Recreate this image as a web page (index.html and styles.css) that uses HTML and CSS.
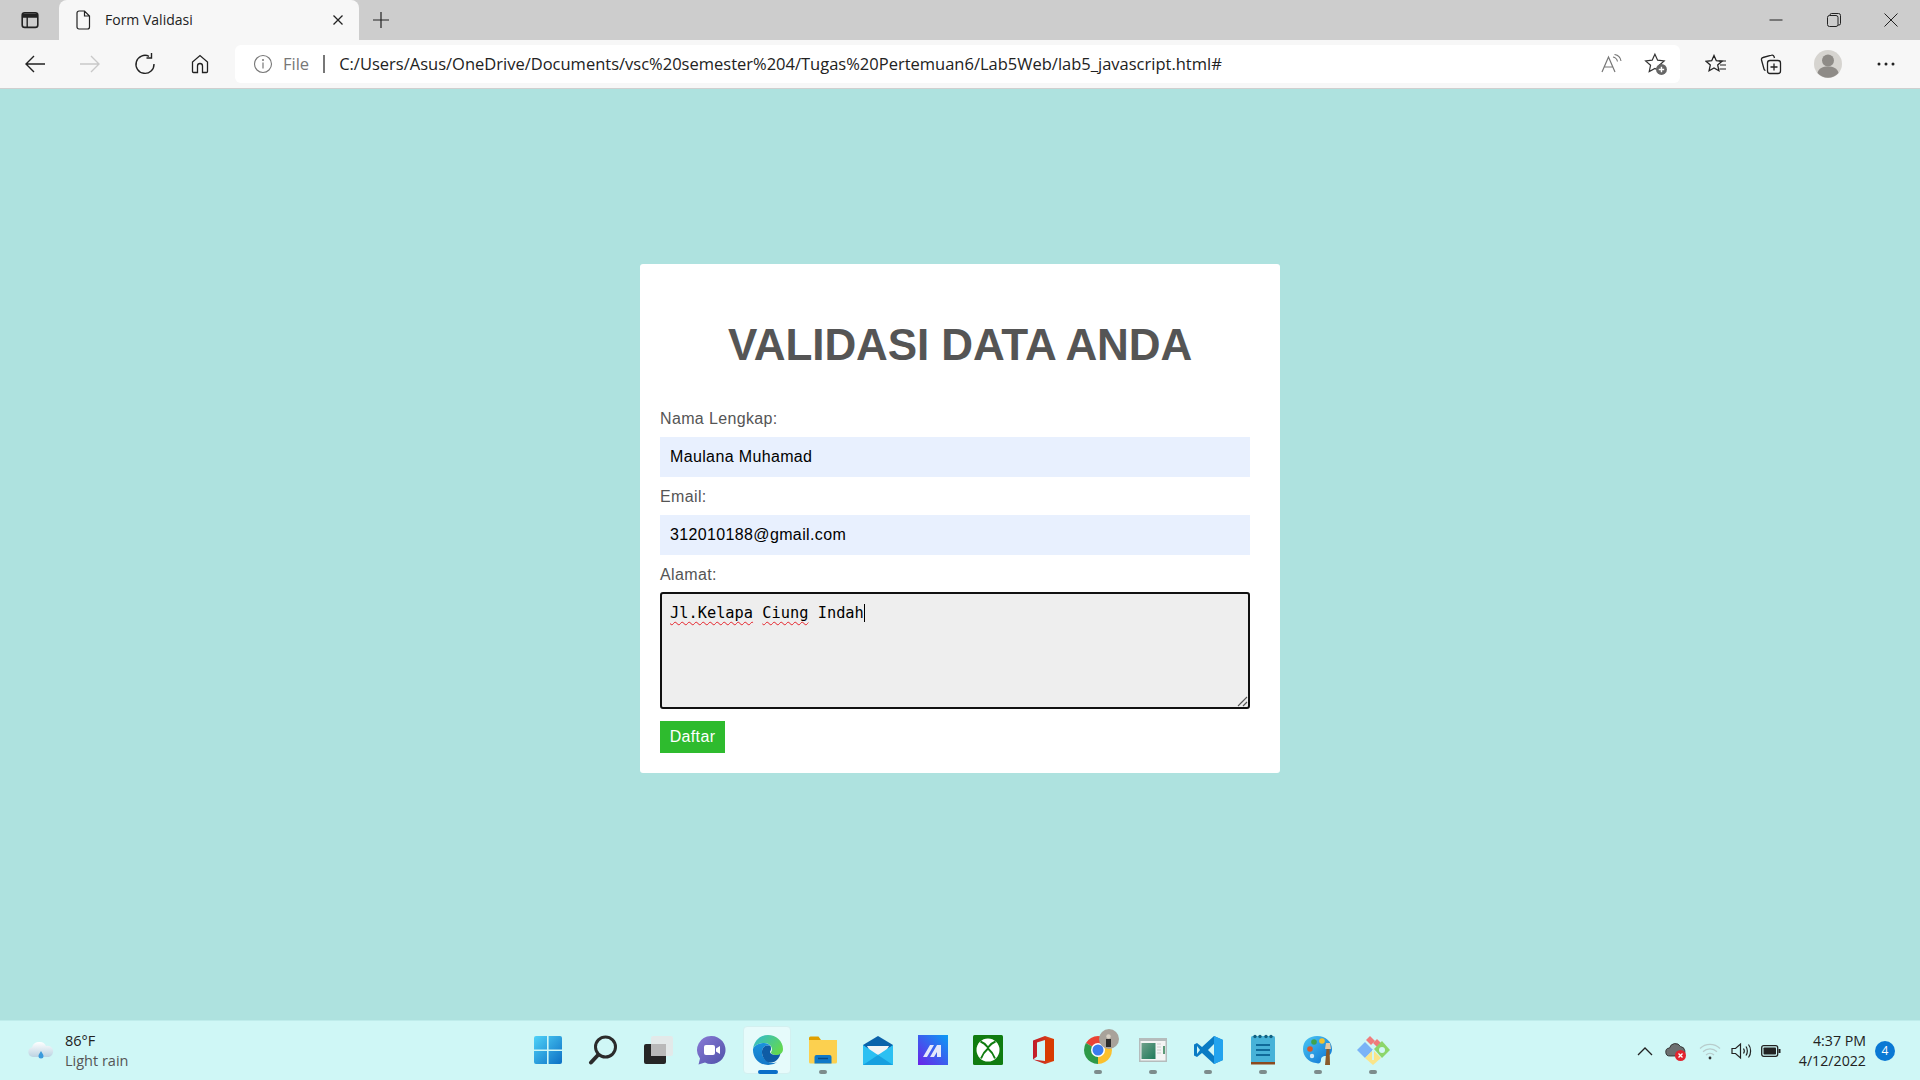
FILE: index.html
```html
<!DOCTYPE html>
<html lang="en">
  <head>
    <meta charset="UTF-8" />
    <title>Form Validasi</title>
    <link rel="stylesheet" href="styles.css">
  </head>
  <body>
    <div id="screen">
      <!-- browser tabs -->
      <div class="tabbar">
        <div class="side-btn">
          <svg width="18" height="18" viewBox="0 0 18 18"><rect x="1.2" y="1.8" width="15.6" height="14.6" rx="2.5" fill="none" stroke="#222" stroke-width="1.6"/><path d="M1.5 6h15M6.2 6v10" stroke="#222" stroke-width="1.4"/><path d="M2 2.5h14v3.5H2z" fill="#222"/></svg>
        </div>
        <div class="tab">
          <svg class="tab-doc" width="16" height="20" viewBox="0 0 16 20"><path d="M2 3a2 2 0 0 1 2-2h5.500L14.500 6v11a2 2 0 0 1-2 2H4a2 2 0 0 1-2-2zM9.500 1v5h5" fill="none" stroke="#222" stroke-width="1.200"/></svg>
          <span class="tab-title">Form Validasi</span>
          <svg class="tab-x" width="12" height="12" viewBox="0 0 12 12"><path d="M1.500 1.500l9 9M10.500 1.500l-9 9" stroke="#222" stroke-width="1.300"/></svg>
        </div>
        <div class="new-tab">
          <svg width="18" height="18" viewBox="0 0 18 18"><path d="M9 1v16M1 9h16" stroke="#222" stroke-width="1.200"/></svg>
        </div>
        <div class="win-btns">
          <div class="win win-min"><svg width="14" height="14" viewBox="0 0 14 14"><path d="M.5 7h13" stroke="#222" stroke-width="1"/></svg></div>
          <div class="win"><svg width="14" height="14" viewBox="0 0 14 14"><rect x=".5" y="2.500" width="10.500" height="11" rx="2" fill="none" stroke="#222"/><path d="M3 2.500V2a1.500 1.500 0 0 1 1.500-1.500h7A2 2 0 0 1 13.500 2.500v8a1.500 1.500 0 0 1-1.500 1.500H11" fill="none" stroke="#222"/></svg></div>
          <div class="win"><svg width="14" height="14" viewBox="0 0 14 14"><path d="M.5.5l13 13M13.500.5l-13 13" stroke="#222" stroke-width="1"/></svg></div>
        </div>
      </div>

      <!-- address bar row -->
      <div class="toolbar">
        <div class="tool"><svg width="22" height="20" viewBox="0 0 22 20"><path d="M21 10H2M10 2l-8 8 8 8" fill="none" stroke="#222" stroke-width="1.400"/></svg></div>
        <div class="tool"><svg width="22" height="20" viewBox="0 0 22 20"><path d="M1 10h19M12 2l8 8-8 8" fill="none" stroke="#c9c9c9" stroke-width="1.400"/></svg></div>
        <div class="tool"><svg width="22" height="22" viewBox="0 0 22 22"><path d="M15 3.300A9 9 0 1 0 20 11" fill="none" stroke="#222" stroke-width="1.400"/><path d="M15.500 0v5h-5" fill="none" stroke="#222" stroke-width="1.400" transform="translate(2 0)"/></svg></div>
        <div class="tool"><svg width="20" height="20" viewBox="0 0 20 20"><path d="M7.500 18.500V12a2.500 2.500 0 0 1 5 0v6.500h4a1 1 0 0 0 1-1V8L10 1.500 2.500 8v9.500a1 1 0 0 0 1 1z" fill="none" stroke="#222" stroke-width="1.300"/></svg></div>
        <div class="addr">
          <svg class="addr-info" width="20" height="20" viewBox="0 0 20 20"><circle cx="10" cy="10" r="8.500" fill="none" stroke="#777" stroke-width="1.100"/><path d="M10 8.500v6" stroke="#777" stroke-width="1.200"/><circle cx="10" cy="6" r="1" fill="#777"/></svg>
          <span class="addr-file">File</span>
          <span class="addr-sep"></span>
          <span class="addr-url">C:/Users/Asus/OneDrive/Documents/vsc%20semester%204/Tugas%20Pertemuan6/Lab5Web/lab5_javascript.html#</span>
          <svg class="addr-read" width="22" height="20" viewBox="0 0 22 20"><path d="M1 18L7.500 3 14 18M3.500 13h8" fill="none" stroke="#777" stroke-width="1.200"/><path d="M12 3c2.500.5 4 2.200 4.500 4.500M13.500 .5c3.500.5 6 3.200 6.500 6.500" fill="none" stroke="#777" stroke-width="1.100"/></svg>
          <svg class="addr-star" width="24" height="24" viewBox="0 0 22 22"><path d="M10 2l2.500 5.500 6 .7-4.500 4 1.200 5.800L10 15l-5.200 3 1.200-5.800-4.500-4 6-.7z" fill="none" stroke="#333" stroke-width="1.100"/><circle cx="16" cy="16" r="5" fill="#666"/><path d="M16 13.500v5M13.500 16h5" stroke="#fff" stroke-width="1.300"/></svg>
        </div>
        <div class="tool"><svg width="22" height="20" viewBox="0 0 22 20"><path d="M9 1.500l2.300 5.200 5.700.6-4.300 3.800 1.200 5.600L9 13.900l-4.900 2.800 1.200-5.600L1 7.300l5.700-.6z" fill="none" stroke="#222" stroke-width="1.300"/><path d="M14 7h7M15 11h6M14.500 15h6.500" stroke="#222" stroke-width="1.200"/></svg></div>
        <div class="tool"><svg width="22" height="22" viewBox="0 0 22 22"><rect x="7.500" y="7.500" width="13" height="13" rx="2.500" fill="none" stroke="#222" stroke-width="1.300"/><path d="M14 10.500v7M10.500 14h7" stroke="#222" stroke-width="1.300"/><path d="M14.500 5l-.5-1.500a2 2 0 0 0-2.500-1.300L3 4.500a2 2 0 0 0-1.500 2.500l2.500 9c.2.7.6 1.200 1.500 1.500" fill="none" stroke="#222" stroke-width="1.300"/></svg></div>
        <div class="tool tool-profile">
          <svg width="28" height="28" viewBox="0 0 28 28"><circle cx="14" cy="14" r="14" fill="#d6d4d0"/><circle cx="14" cy="10.500" r="6" fill="#8e8b87"/><path d="M3.500 23c1-5 5.500-6.500 10.500-6.500s9.500 1.500 10.500 6.500A14 14 0 0 1 3.500 23z" fill="#8e8b87"/></svg>
        </div>
        <div class="tool"><svg width="18" height="4" viewBox="0 0 18 4"><circle cx="2" cy="2" r="1.500" fill="#222"/><circle cx="9" cy="2" r="1.500" fill="#222"/><circle cx="16" cy="2" r="1.500" fill="#222"/></svg></div>
      </div>

      <!-- the page itself -->
      <main class="page">
        <form class="card">
          <h1 class="card-title">VALIDASI DATA ANDA</h1>
          <label class="lbl" for="nama">Nama Lengkap:</label>
          <input class="txt" id="nama" type="text" value="Maulana Muhamad" />
          <label class="lbl" for="email">Email:</label>
          <input class="txt" id="email" type="text" value="312010188@gmail.com" />
          <div class="lbl lbl-area">Alamat:</div>
          <div class="area">
            <span class="typo">Jl.Kelapa</span> <span class="typo">Ciung</span> Indah<span class="caret"></span>
            <svg class="grip" width="12" height="12" viewBox="0 0 12 12"><path d="M11 2L2 11M11 7l-4 4" stroke="#555" stroke-width="1.100"/></svg>
          </div>
          <button class="btn" type="button">Daftar</button>
        </form>
      </main>

      <!-- windows taskbar -->
      <footer class="taskbar">
        <div class="weather">
          <svg width="28" height="24" viewBox="0 0 28 24"><defs><linearGradient id="cl" x1="0" y1="0" x2="0" y2="1"><stop offset="0" stop-color="#fff"/><stop offset="1" stop-color="#bcd3e2"/></linearGradient></defs><path d="M6 18a5 5 0 0 1-1-9.800A7 7 0 0 1 13 3a6.500 6.500 0 0 1 6 4 5.500 5.500 0 0 1 3 11z" fill="url(#cl)"/><path d="M14 12c-1.500 2.500-2.500 3.500-2.500 5a2.500 2.500 0 0 0 5 0c0-1.500-1-2.500-2.500-5z" fill="#3b9bdc"/></svg>
          <div class="weather-txt">
            <div class="temp">86°F</div>
            <div class="cond">Light rain</div>
          </div>
        </div>

        <div class="apps">
          <div class="app">
            <svg width="30" height="30" viewBox="0 0 30 30"><defs><linearGradient id="w" x1="0" y1="0" x2="1" y2="1"><stop offset="0" stop-color="#4fd2f8"/><stop offset="1" stop-color="#0c6fc4"/></linearGradient></defs><path d="M1 3a2 2 0 0 1 2-2h11v13.400H1zM15.600 1H27a2 2 0 0 1 2 2v11.400H15.600zM1 16h13v13H3a2 2 0 0 1-2-2zM15.600 16H29v11a2 2 0 0 1-2 2H15.600z" fill="url(#w)"/></svg>
          </div>
          <div class="app">
            <svg width="30" height="30" viewBox="0 0 30 30"><circle cx="17.500" cy="12" r="10" fill="none" stroke="#2b2b2b" stroke-width="3"/><path d="M10 20l-7 7.500" stroke="#2b2b2b" stroke-width="4" stroke-linecap="round"/></svg>
          </div>
          <div class="app">
            <svg width="30" height="30" viewBox="0 0 30 30"><rect x="1" y="9" width="22" height="20" rx="2" fill="#262626"/><rect x="8" y="1" width="22" height="20" rx="2" fill="#e6e6e6" fill-opacity=".85"/><rect x="8" y="9" width="15" height="12" fill="#b9b9b9"/></svg>
          </div>
          <div class="app app-chat">
            <svg width="30" height="30" viewBox="0 0 30 30"><defs><linearGradient id="ch" x1="0" y1="0" x2="1" y2="1"><stop offset="0" stop-color="#8a7ad6"/><stop offset="1" stop-color="#4f51a8"/></linearGradient></defs><path d="M15.500 1a14 14 0 1 1-6.500 26.400L2.500 29.500 4 23.500A14 14 0 0 1 15.500 1z" fill="url(#ch)"/><rect x="8" y="10" width="11" height="10" rx="2" fill="#fff"/><path d="M20 13.500l4-2.500v8l-4-2.500z" fill="#fff"/></svg>
          </div>
          <div class="app app-active">
            <svg width="32" height="32" viewBox="0 0 32 32"><defs><linearGradient id="e1" x1="0" y1="0" x2="1" y2=".6"><stop offset="0" stop-color="#2fb8d8"/><stop offset="1" stop-color="#62d851"/></linearGradient><linearGradient id="e2" x1="0" y1="0" x2="0" y2="1"><stop offset="0" stop-color="#1a92dc"/><stop offset="1" stop-color="#1578c8"/></linearGradient></defs><path d="M1 15C2 7 8 1 16 1c8 0 15 6 15 14 0 4-3 6-7 6-3 0-5-1-5-2.500 0-1 1-1.500 1-3 0-4-4-7-9-6.500C6 9.500 2 12 1 15z" fill="url(#e1)"/><path d="M1 15c1-3 5-5.500 10-6 3-.3 6 .8 7.500 3-4-1.500-8 .5-8.500 5-.5 5 3 10 8 11.500 2 .6 5 .6 7-.3A15 15 0 0 1 16 31C7 31 .5 24 1 15z" fill="url(#e2)"/><path d="M10 17c.5-4.500 4.500-6.500 8.500-5 .4.700.5 1.500.5 3 0 1.500-1 2-1 3 0 1.500 2 3 6 3 2 0 3-.3 4.500-1.500-1 4.500-3.500 7-6 8.300-2 .9-5 .9-7 .3C13 26.600 9.500 22 10 17z" fill="#0f5ca5"/></svg>
            <span class="pip pip-on"></span>
          </div>
          <div class="app">
            <svg width="30" height="30" viewBox="0 0 30 30"><path d="M1 3a1.500 1.500 0 0 1 1.500-1.500h8L13 5H1z" fill="#e0a000"/><path d="M1 5h28v22a1.500 1.500 0 0 1-1.500 1.500h-25A1.500 1.500 0 0 1 1 27z" fill="#fcd04f"/><path d="M6.500 22a2 2 0 0 1 2-2h13a2 2 0 0 1 2 2v6.500h-17z" fill="#0f79c8"/><path d="M10 23.500h10" stroke="#074a86" stroke-width="1.500"/></svg>
            <span class="pip"></span>
          </div>
          <div class="app">
            <svg width="30" height="30" viewBox="0 0 30 30"><path d="M15 1L0 10v19a1 1 0 0 0 1 1h28a1 1 0 0 0 1-1V10z" fill="#0a62aa"/><path d="M4 11h22l-4 7-7 2-7-2z" fill="#f2f4f6"/><path d="M0 10l15 10 15-10v20H0z" fill="#2cc0f2"/><path d="M0 30l15-10 15 10z" fill="#17a0df"/></svg>
          </div>
          <div class="app">
            <svg width="30" height="30" viewBox="0 0 30 30"><defs><linearGradient id="mz" x1="0" y1="1" x2="1" y2="0"><stop offset="0" stop-color="#6b22e8"/><stop offset="1" stop-color="#0a9cf5"/></linearGradient></defs><rect width="30" height="30" fill="url(#mz)"/><path d="M5 22l7-12h4l-7 12zM12 22l7-12h4v12h-4v-5l-3 5z" fill="#e4e8fb"/></svg>
          </div>
          <div class="app">
            <svg width="30" height="30" viewBox="0 0 30 30"><rect width="30" height="30" rx="1.500" fill="#107c10"/><circle cx="15" cy="15" r="11.500" fill="#fff"/><path d="M6 5c3.500 1 6.500 3.500 9 6.500 2.500-3 5.500-5.500 9-6.500-2.500-1.500-5.500-2.500-9-2.500S8.500 3.500 6 5zM5.500 24.500c1.500-4.500 5-9 9.500-11.500 4.500 2.500 8 7 9.500 11.500-2.500 2-5.500 3-9.500 3s-7-1-9.500-3z" fill="#107c10" fill-opacity="0"/><path d="M7.500 6.500c3 1 5.500 3.500 7.500 6 2-2.500 4.500-5 7.500-6M8 23.500c1.500-4 4-7.500 7-10 3 2.500 5.500 6 7 10" fill="none" stroke="#107c10" stroke-width="2"/></svg>
          </div>
          <div class="app">
            <svg width="24" height="30" viewBox="0 0 24 30"><defs><linearGradient id="of" x1="0" y1="0" x2="1" y2="0"><stop offset="0" stop-color="#c01a2a"/><stop offset="1" stop-color="#e04a10"/></linearGradient></defs><path d="M14 1l9 3v22l-9 3-12-4.500 12 1.500V5L6 7.500v14l-4 3V5.500z" fill="url(#of)"/><path d="M14 5v21l9 0V4z" fill="#d83b01"/></svg>
          </div>
          <div class="app">
            <svg width="44" height="44" viewBox="0 0 44 44"><path d="M22 22L9.900 15A14 14 0 0 1 34.100 15z" fill="#ea4335"/><path d="M22 22L34.100 15A14 14 0 0 1 22 36z" fill="#fbc02d"/><path d="M22 22L22 36A14 14 0 0 1 9.900 15z" fill="#2d9a48"/><circle cx="22" cy="22" r="7" fill="#fff"/><circle cx="22" cy="22" r="5.500" fill="#3a7cee"/><circle cx="33" cy="11" r="10" fill="#a8a29a"/><path d="M30 19v-8h5v8z" fill="#2c2c2c"/><circle cx="32.500" cy="8.500" r="2.200" fill="#d8d0c4"/></svg>
            <span class="pip"></span>
          </div>
          <div class="app">
            <svg width="28" height="24" viewBox="0 0 28 24"><defs><linearGradient id="th" x1="0" y1="0" x2="1" y2="1"><stop offset="0" stop-color="#6fa08a"/><stop offset="1" stop-color="#1f7a5a"/></linearGradient></defs><rect width="28" height="24" fill="#b5bcbc"/><rect x="1.500" y="3" width="25" height="19.500" fill="#f4f4f4"/><rect x="2.500" y="5" width="14" height="16" fill="url(#th)"/><path d="M18 6h4M18 9h4M18 12h4M18 15h4" stroke="#ccc"/><rect x="24" y="8" width="2" height="8" fill="#5c9a78"/></svg>
            <span class="pip"></span>
          </div>
          <div class="app">
            <svg width="30" height="30" viewBox="0 0 30 30"><path d="M21 1l9 4v20l-9 4-12-11-5 4-3-1.500v-11L4 8l5 4z" fill="#0a7bc4"/><path d="M21 1l9 4v20l-9 4z" fill="#23a3ee"/><path d="M21 9l-6 6 6 6z" fill="#d3f6f6"/><path d="M4 11v8l3-4z" fill="#d3f6f6"/></svg>
            <span class="pip"></span>
          </div>
          <div class="app">
            <svg width="26" height="32" viewBox="0 0 26 32"><rect x="1" y="2" width="24" height="28" rx="1.500" fill="#47b2d8"/><path d="M1 28h24v2.500H1z" fill="#8c4a1e"/><path d="M6 11h14M6 16h14M6 21h14" stroke="#0f6a9a" stroke-width="2"/><g fill="#13607f"><circle cx="5" cy="2.500" r="1.700"/><circle cx="10" cy="2.500" r="1.700"/><circle cx="16" cy="2.500" r="1.700"/><circle cx="21" cy="2.500" r="1.700"/></g></svg>
            <span class="pip"></span>
          </div>
          <div class="app">
            <svg width="30" height="32" viewBox="0 0 30 32"><defs><linearGradient id="pl" x1="0" y1="0" x2="1" y2="1"><stop offset="0" stop-color="#4ac8f5"/><stop offset="1" stop-color="#0d6fd0"/></linearGradient></defs><path d="M14 2c9 0 15 6 15 13 0 5-3 7-6 7-4 0-5 2-5 4 0 3-2 4-5 3C5 28 0 22 0 15 0 7 6 2 14 2z" fill="url(#pl)"/><circle cx="7" cy="15" r="2.800" fill="#d8582a"/><circle cx="11" cy="8" r="2.800" fill="#3fa34d"/><circle cx="19" cy="7" r="2.800" fill="#f2c22e"/><circle cx="9" cy="22" r="2.200" fill="#cfe9f8"/><path d="M22 31l1.500-16h3L27 31z" fill="#8a5a2a"/><path d="M22 15l1-6h4l1 6z" fill="#e5c8a0"/></svg>
            <span class="pip"></span>
          </div>
          <div class="app">
            <svg width="34" height="30" viewBox="0 0 34 30"><path d="M12 0l5 5-4 4-5-5z" fill="#ef7c7c" transform="translate(2 1)"/><path d="M17 8l4-4 5 5-4 4z" fill="#ef7c7c"/><path d="M1 15l8-8 8 8-8 8z" fill="#7ab3f7"/><path d="M18 14l8-8 8 9-8 8z" fill="#8cd66a"/><path d="M9 23l8-8 8 8-8 7z" fill="#fae58a"/><circle cx="26" cy="15" r="3" fill="#d3f6f6"/><path d="M17 15v10" stroke="#d3f6f6" stroke-width="2"/></svg>
            <span class="pip"></span>
          </div>
        </div>

        <div class="tray">
          <svg class="tray-i" width="16" height="10" viewBox="0 0 16 10"><path d="M1 9l7-7 7 7" fill="none" stroke="#222" stroke-width="1.300"/></svg>
          <svg class="tray-i" width="22" height="22" viewBox="0 0 22 22"><path d="M5 16a4 4 0 0 1-.5-8A6 6 0 0 1 15.500 6.500 5 5 0 0 1 17 16z" fill="#6c6f70" stroke="#222" stroke-width=".8"/><circle cx="15.500" cy="15.500" r="5.500" fill="#e1242f"/><path d="M13.500 13.500l4 4M17.500 13.500l-4 4" stroke="#fff" stroke-width="1.300"/></svg>
          <svg class="tray-i tray-wifi" width="22" height="18" viewBox="0 0 22 18"><path d="M1 6.500a14 14 0 0 1 20 0M4 9.800a10 10 0 0 1 14 0M7 13a6 6 0 0 1 8 0" fill="none" stroke="#b8cccc" stroke-width="1.200"/><circle cx="11" cy="16" r="1.400" fill="#333"/></svg>
          <svg class="tray-i tray-vol" width="22" height="18" viewBox="0 0 22 18"><path d="M1 6.500h3.500L9.500 2v14l-5-4.500H1z" fill="none" stroke="#222" stroke-width="1.200"/><path d="M12.500 6.500c1 1.500 1 3.500 0 5M15 4.500c1.800 2.500 1.800 6.500 0 9M17.500 2.500c2.800 3.500 2.800 9.500 0 13" fill="none" stroke="#222" stroke-width="1.200"/></svg>
          <svg class="tray-i" width="20" height="12" viewBox="0 0 20 12"><rect x=".7" y=".7" width="16" height="10.600" rx="2" fill="none" stroke="#222" stroke-width="1.300"/><rect x="2.500" y="2.500" width="12.500" height="7" rx=".8" fill="#222"/><rect x="17.500" y="4" width="2" height="4" fill="#222"/></svg>
          <div class="clock">
            <div>4:37 PM</div>
            <div>4/12/2022</div>
          </div>
          <div class="badge">4</div>
        </div>
      </footer>
    </div>
  </body>
</html>
```

FILE: styles.css
```css
body,
html {
  margin: 0;
  padding: 0;
}
/* the whole desktop, stacked top to bottom */
#screen {
  display: flex;
  flex-direction: column;
  width: 1920px;
  height: 1080px;
  overflow: hidden;
  font-family: "Open Sans", "Noto Sans", sans-serif;
  color: #222;
}

/* tab strip */
.tabbar {
  display: flex;
  height: 40px;
  background-color: #cdcdcd;
}
.side-btn {
  display: flex;
  align-items: center;
  justify-content: center;
  width: 59px;
}
.tab {
  display: flex;
  align-items: center;
  box-sizing: border-box;
  width: 300px;
  padding: 0 15px 0 16px;
  background-color: #f7f7f7;
  border-radius: 8px 8px 0 0;
}
.tab-doc {
  margin-right: 14px;
}
.tab-title {
  flex: 1;
  padding-bottom: 1px;
  font-size: 14px;
}
.new-tab {
  display: flex;
  align-items: center;
  justify-content: center;
  width: 44px;
}
.win-btns {
  display: flex;
  margin-left: auto;
  padding-right: 1px;
}
.win {
  display: flex;
  align-items: center;
  justify-content: center;
  width: 57px;
}
.win-min {
  margin-right: 1px;
}

/* address row */
.toolbar {
  display: flex;
  align-items: center;
  box-sizing: border-box;
  height: 49px;
  padding: 0 7px;
  background-color: #f7f7f7;
  border-bottom: 1px solid #cfcfcf;
}
.tool {
  display: flex;
  flex: none;
  align-items: center;
  justify-content: center;
  width: 55px;
}
.tool-profile {
  width: 60px;
}
.addr {
  display: flex;
  flex: 1;
  align-items: center;
  height: 38px;
  margin: 0 8px;
  padding: 0 12px 0 18px;
  background-color: #fff;
  border-radius: 6px;
}
.addr-file {
  margin-left: 10px;
  padding-bottom: 2px;
  font-size: 16.500px;
  color: #777;
}
.addr-sep {
  width: 2px;
  height: 18px;
  margin: 0 14px;
  background-color: #777;
}
.addr-url {
  flex: 1;
  padding-bottom: 2px;
  font-size: 16.500px;
  white-space: nowrap;
}
.addr-read {
  margin-right: 21px;
}

/* page area */
.page {
  display: flex;
  flex: 1;
  justify-content: center;
  align-items: flex-start;
  padding-top: 175px;
  background-color: #aee2df;
}
.card {
  box-sizing: border-box;
  width: 640px;
  padding: 20px;
  background-color: #fff;
  border-radius: 3px;
  font-family: "Liberation Sans", Arial, sans-serif;
}
.card-title {
  margin: 36px 0 40px;
  font-size: 44px;
  line-height: 50px;
  font-weight: bold;
  letter-spacing: -0.1px;
  text-align: center;
  color: #555;
}
.lbl {
  display: block;
  margin: 11px 0 9px;
  font-size: 16px;
  line-height: 18px;
  letter-spacing: 0.36px;
  color: #555;
}
.lbl-area {
  margin-bottom: 8px;
}
.txt {
  display: block;
  box-sizing: border-box;
  width: 590px;
  height: 40px;
  padding: 0 10px;
  border: none;
  background-color: #e8f0fe;
  font-family: inherit;
  font-size: 16px;
  letter-spacing: 0.36px;
  color: #000;
}
.area {
  position: relative;
  box-sizing: border-box;
  width: 590px;
  height: 117px;
  padding: 8px;
  background-color: #eee;
  border: 2px solid #111;
  border-radius: 3px;
  font-family: "DejaVu Sans Mono", monospace;
  font-size: 15.330px;
  line-height: 22px;
  color: #000;
}
.typo {
  text-decoration: underline wavy #e5222a;
  text-decoration-thickness: 1px;
  text-underline-offset: 3px;
}
.caret {
  display: inline-block;
  width: 1px;
  height: 18px;
  vertical-align: -4px;
  background-color: #000;
}
.grip {
  position: absolute;
  right: 0;
  bottom: 0;
}
.btn {
  display: block;
  width: 65px;
  height: 32px;
  margin-top: 12px;
  padding: 0;
  border: none;
  background-color: #2ebb2e;
  font-family: inherit;
  font-size: 16px;
  letter-spacing: 0.36px;
  color: #fff;
}

/* taskbar */
.taskbar {
  display: grid;
  grid-template-columns: 1fr auto 1fr;
  align-items: center;
  box-sizing: border-box;
  height: 60px;
  background-color: #cff7f6;
  border-top: 1px solid #bfeceb;
}
.weather {
  display: flex;
  align-items: center;
  padding-left: 27px;
}
.weather-txt {
  margin-left: 10px;
  font-size: 14.500px;
  line-height: 20px;
}
.cond {
  color: #555;
}
.apps {
  display: flex;
  margin-bottom: 2px;
}
.app {
  position: relative;
  display: flex;
  align-items: center;
  justify-content: center;
  width: 55px;
  height: 48px;
}
.app-chat svg {
  left: -2px;
}
.app-active::before {
  content: "";
  position: absolute;
  top: 0;
  bottom: 0;
  left: 3px;
  right: 4px;
  background-color: #e6fbfb;
  border: 1px solid #d3f0f0;
  border-radius: 4px;
}
.app svg {
  position: relative;
}
.pip {
  position: absolute;
  left: 50%;
  bottom: 0;
  width: 8px;
  height: 4px;
  margin-left: -4px;
  background-color: #7d8c8c;
  border-radius: 2px;
}
.pip-on {
  width: 20px;
  margin-left: -10px;
  background-color: #0a6fc8;
}
.tray {
  display: flex;
  align-items: center;
  justify-content: flex-end;
  padding-right: 25px;
}
.tray-i {
  margin-right: 12px;
}
.tray-wifi {
  margin-right: 10px;
}
.tray-vol {
  margin-right: 8px;
}
.clock {
  margin-left: 6px;
  font-size: 14.200px;
  line-height: 20px;
  text-align: right;
}
.badge {
  display: flex;
  align-items: center;
  justify-content: center;
  width: 20px;
  height: 20px;
  margin-left: 9px;
  background-color: #0a78d4;
  border-radius: 50%;
  font-size: 12px;
  color: #fff;
}
```
